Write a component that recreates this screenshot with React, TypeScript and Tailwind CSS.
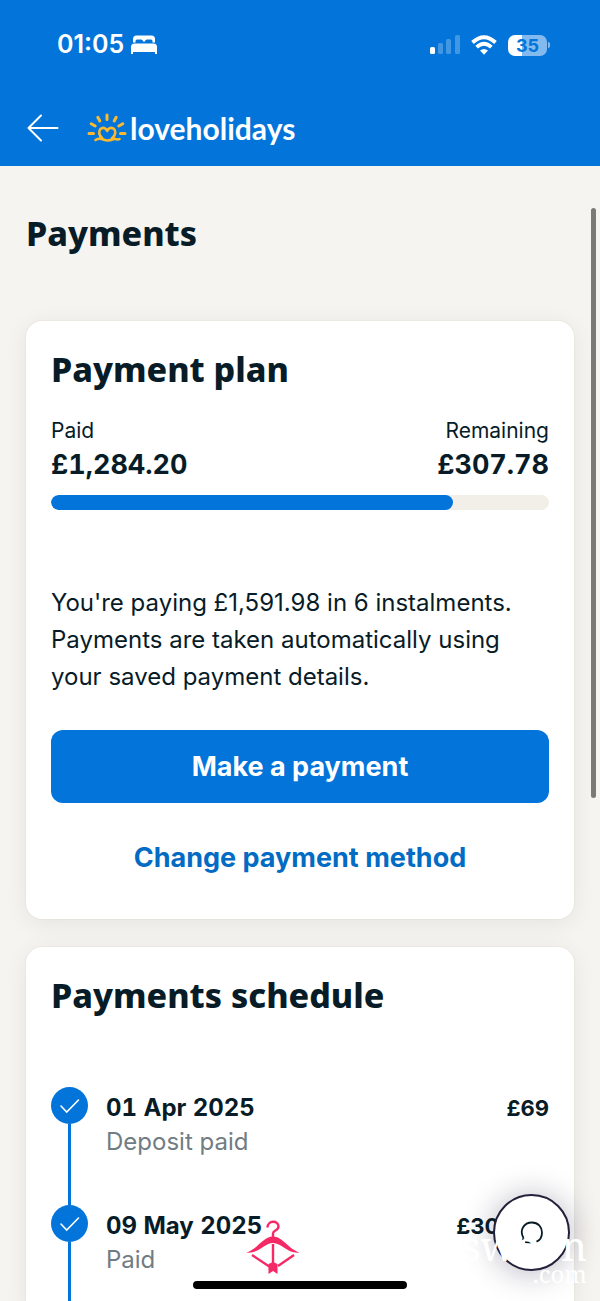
import React from 'react';

interface Instalment {
    date: string;
    status: string;
    amount: string;
}

const instalments: Instalment[] = [
    { date: '01 Apr 2025', status: 'Deposit paid', amount: '£69' },
    { date: '09 May 2025', status: 'Paid', amount: '£303.80' },
];

const paid = 1284.2;
const total = 1591.98;

const heading = 'font-["Noto_Sans",sans-serif] font-extrabold text-[34px] leading-10';
const card = 'rounded-2xl bg-white px-[25px] shadow-[0_4px_24px_rgba(0,10,40,0.07),0_0_0_1px_#f1eee7]';

const BedIcon = () => (
    <svg className="h-5 w-7" viewBox="0 0 28 20" fill="white" aria-hidden="true">
        <path d="M3 7.500V4Q3 0.500 6.500 0.500H21.500Q25 0.500 25 4V7.500H22.500V6Q22.500 4.500 21 4.500H17Q15 4.500 15 6.500H13Q13 4.500 11 4.500H7Q5.500 4.500 5.500 6V7.500Z" />
        <path d="M1 19V12Q1 8.500 4.500 8.500H23.500Q27 8.500 27 12V19H25V17H3V19Z" />
    </svg>
);

const SignalIcon = () => (
    <svg className="h-5 w-[30px]" viewBox="0 0 30 20" fill="white" aria-hidden="true">
        <rect x="0" y="12" width="5" height="7" rx="1.500" />
        <g opacity="0.250">
            <rect x="8" y="8" width="5" height="11" rx="1.500" />
            <rect x="16" y="4" width="5" height="15" rx="1.500" />
            <rect x="25" y="0" width="5" height="19" rx="1.500" />
        </g>
    </svg>
);

const WifiIcon = () => (
    <svg className="h-5 w-[26px]" viewBox="0 0 26 20" fill="none" stroke="white" strokeWidth="3.800" aria-hidden="true">
        <path d="M1.500 7.500Q13 -3 24.500 7.500" />
        <path d="M5.600 12.200Q13 5.500 20.400 12.200" />
        <path d="M13 19.800L9 15.600Q13 12.500 17 15.600Z" fill="white" stroke="none" />
    </svg>
);

const Battery = () => (
    <div className="flex items-center gap-px">
        <div className="flex h-[21px] w-[39px] items-center justify-center rounded-[7px] bg-linear-to-r from-white from-35% to-[#82b9ee] to-35% pt-px text-[18px] leading-5 font-bold text-[#0374da]">
            35
        </div>
        <div className="h-[6px] w-[2px] rounded-r-full bg-[#82b9ee]" />
    </div>
);

const SunLogo = () => (
    <svg className="h-[30px] w-10" viewBox="0 0 40 30" fill="none" stroke="#fdb92e" strokeLinecap="round" strokeLinejoin="round" aria-hidden="true">
        <path
            d="M20 2V6.500M10.800 4.300L12.800 8M29.200 4.300L27.200 8M4.200 10.700L8.200 13M35.800 10.700L31.800 13M2 20.500H6.500M33.500 20.500H38"
            strokeWidth="3"
        />
        <path
            d="M8.500 27C11 25.300 13.500 25.300 17 26.800C20.500 28.300 23.500 27.300 26 26.300C29 25.200 30.500 27.500 32.500 26M15.500 25.500C11.500 22 11.500 18 13.500 16C16 13.600 18.800 15.200 20.200 18C21.600 15.200 24.500 13.600 27 16C29 18 29 22 24.800 25.500"
            strokeWidth="2.600"
        />
    </svg>
);

const TickIcon = () => (
    <svg className="size-[37px] shrink-0" viewBox="0 0 37 37" fill="none" aria-hidden="true">
        <circle cx="18.500" cy="18.500" r="18.500" fill="#0374da" />
        <path d="M10 19L15.700 25L27.500 13" stroke="white" strokeWidth="1.600" strokeLinecap="round" />
    </svg>
);

const BowIcon = () => (
    <svg className="h-[54px] w-[54px]" viewBox="0 0 54 54" fill="none" stroke="#f62967" aria-hidden="true">
        <path d="M21.500 7.500C21.500 0 32.500 0 32.500 6.500C32.500 11 27 10 27 13.500V18" strokeWidth="2.400" />
        <path
            d="M0 32.500C11 30 17 16.500 27 16.500C37 16.500 43 30 54 32.500C41 34 36 23 27 23C18 23 13 34 0 32.500Z"
            fill="#f62967"
            stroke="none"
        />
        <path d="M27 24V46M6 35L24 47M48 35L32 46" strokeWidth="2.400" />
        <path d="M22.500 44L27 42L31.500 44V54L27 51L22.500 54Z" fill="#f62967" stroke="none" />
    </svg>
);

const ScheduleRow: React.FC<Instalment> = ({ date, status, amount }) => (
    <li className="flex h-[118px] gap-[18px]">
        <div className="flex flex-col items-center">
            <TickIcon />
            <div className="w-[3px] grow bg-[#0374da]" />
        </div>
        <div className="grow pt-1">
            <p className="text-2xl leading-[34px] font-bold tabular-nums">{date}</p>
            <p className="text-2xl leading-[34px] text-[#717c83]">{status}</p>
        </div>
        <p className="pt-1 text-[22px] leading-[34px] font-bold">{amount}</p>
    </li>
);

export default function App() {
    return (
        <div className="relative flex h-screen flex-col overflow-hidden bg-[#f6f4f0] font-[Inter,sans-serif] text-[#081c28]">
            <header className="shrink-0 bg-[#0374da] pb-5 text-white">
                <div className="flex h-[90px] items-center justify-between pr-[50px] pl-[57px]">
                    <div className="flex items-center gap-[6px] text-[25px] font-semibold">
                        <span>01:05</span>
                        <BedIcon />
                    </div>
                    <div className="flex items-center gap-[11px]">
                        <SignalIcon />
                        <WifiIcon />
                        <Battery />
                    </div>
                </div>
                <div className="flex h-14 items-center pt-5 pl-[26px]">
                    <button type="button" aria-label="Back" className="mr-7">
                        <svg className="h-7 w-[33px]" viewBox="0 0 33 28" fill="none" stroke="white" strokeWidth="2" strokeLinecap="round" strokeLinejoin="round">
                            <path d="M15 1.500L2.500 14L15 26.500M2.500 14H31.500" />
                        </svg>
                    </button>
                    <SunLogo />
                    <span className="pl-[3px] font-[Lato,sans-serif] text-[30px] leading-9 font-bold">loveholidays</span>
                </div>
            </header>

            <main className="grow overflow-hidden px-[26px]">
                <h1 className={`${heading} pt-[47px]`}>Payments</h1>

                <section className={`${card} mt-[68px] pt-7 pb-6`}>
                    <h2 className={heading}>Payment plan</h2>
                    <div className="mt-[26px] flex justify-between">
                        <div>
                            <p className="text-[21px] leading-8">Paid</p>
                            <p className="text-[27px] leading-9 font-bold tabular-nums">£1,284.20</p>
                        </div>
                        <div className="text-right">
                            <p className="text-[21px] leading-8">Remaining</p>
                            <p className="text-[27px] leading-9 font-bold tabular-nums">£307.78</p>
                        </div>
                    </div>
                    <div className="mt-3 h-[15px] overflow-hidden rounded-full bg-[#f2efe9]">
                        <div className="h-full rounded-full bg-[#0374da]" style={{ width: `${(paid / total) * 100}%` }} />
                    </div>
                    <p className="mt-[74px] text-2xl leading-[37px]">
                        You're paying £1,591.98 in 6 instalments. Payments are taken automatically using your saved
                        payment details.
                    </p>
                    <button type="button" className="mt-[35px] h-[73px] w-full rounded-xl bg-[#0374da] pt-px text-[27px] font-bold text-white">
                        Make a payment
                    </button>
                    <button type="button" className="mt-[18px] h-[74px] w-full text-[27px] font-bold text-[#026bc4]">
                        Change payment method
                    </button>
                </section>

                <section className={`${card} mt-7 pt-7`}>
                    <h2 className={heading}>Payments schedule</h2>
                    <ul className="mt-[72px]">
                        {instalments.map((item) => (
                            <ScheduleRow key={item.date} {...item} />
                        ))}
                    </ul>
                </section>
            </main>

            <div className="absolute top-[208px] right-1 h-[590px] w-[5px] rounded-full bg-[#7c7a77]" />

            <button
                type="button"
                aria-label="Open chat"
                className="absolute right-[30px] bottom-[30px] flex size-[77px] items-center justify-center rounded-full border-2 border-[#25203a] bg-white shadow-[0_2px_32px_rgba(20,15,50,0.3)]"
            >
                <svg className="size-6" viewBox="0 0 24 24" fill="none" stroke="#081c28" strokeWidth="1.800">
                    <path d="M3.500 17C-1 9 4 1.500 12 1.500C18 1.500 22 6 22 11.500C22 16 19.500 19.500 16.500 20.700M3.500 17L2 21M5 21L13 21.500" />
                </svg>
            </button>

            <div className="absolute right-[13px] bottom-[13px] text-right font-['Noto_Serif','DejaVu_Serif',serif] text-white">
                <p className="text-[40px] leading-7">swoon</p>
                <p className="text-2xl leading-7">.com</p>
            </div>
            <div className="absolute bottom-[27px] left-[246px]">
                <BowIcon />
            </div>
            <div className="absolute bottom-3 left-1/2 h-2 w-[214px] -translate-x-1/2 rounded-full bg-black" />
        </div>
    );
}
